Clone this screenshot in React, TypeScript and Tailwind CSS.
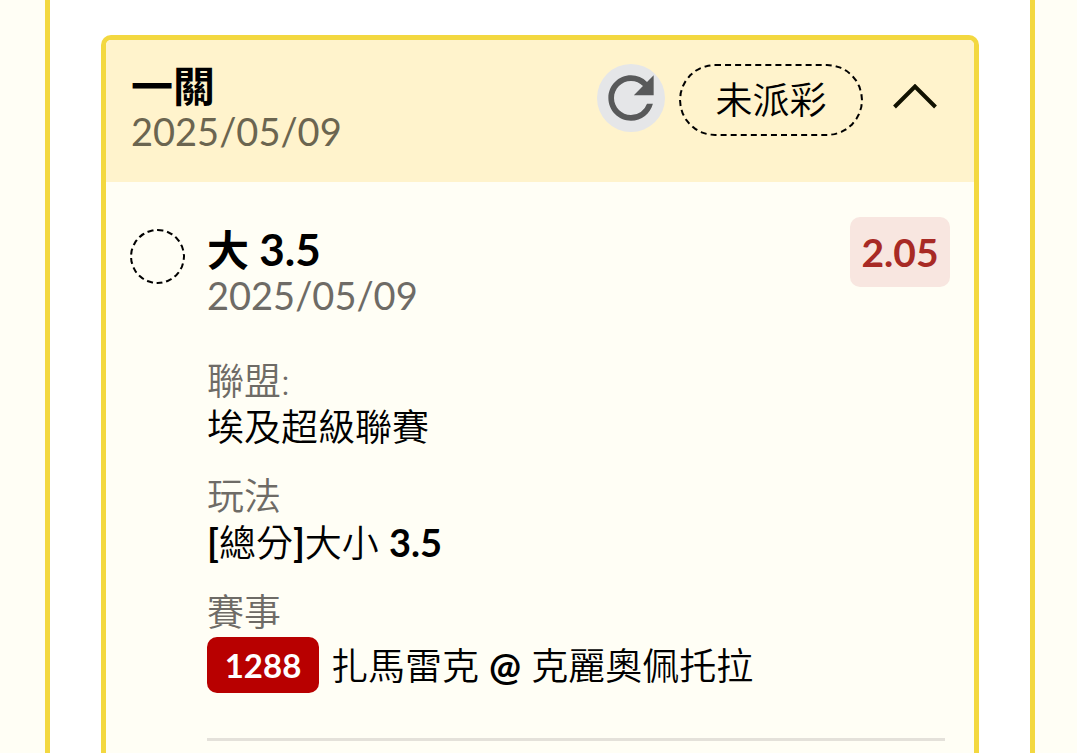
import { useState } from 'react'
import { MdRefresh } from 'react-icons/md'

type Detail = {
    label: string
    value: React.ReactNode
}

const details: Detail[] = [
    {
        label: '聯盟:',
        value: '埃及超級聯賽'
    },
    {
        label: '玩法',
        value: <><Latin>[</Latin>總分<Latin>]</Latin>大小 <Latin>3.5</Latin></>
    }
]

function Latin({children}: {children: React.ReactNode}){
    return <span className="text-[38px] font-bold">{children}</span>
}

function BetHeader({open, onToggle}: {open: boolean, onToggle: () => void}){
    return (
        <header className="flex justify-between items-start bg-[#fff3cc] pt-[24px] pb-[28px] pl-[25px] pr-[37px]">
            <div>
                <h1 className="text-[42px] leading-[44px] font-bold">一關</h1>
                <p className="text-[38px] leading-[46px] text-[#6b6550]">2025/05/09</p>
            </div>
            <div className="flex items-start">
                <button type="button" aria-label="重新整理" className="size-[68px] rounded-full bg-[#e5e6e8] text-[#58595a] cursor-pointer">
                    <MdRefresh className="size-full" />
                </button>
                <span className="ml-[14px] flex items-center justify-center w-[184px] h-[72px] rounded-full border-2 border-dashed border-black text-[37px] leading-[46px] font-[350]">未派彩</span>
                <button type="button" aria-label="收合" aria-expanded={open} onClick={onToggle} className="ml-[30px] h-[68px] cursor-pointer">
                    <svg className="w-[44px] h-[28px]" viewBox="0 0 44 28" fill="none" stroke="#111100" strokeWidth="4">
                        <path d="M1.5 23 L22 2.500 L42.500 23" />
                    </svg>
                </button>
            </div>
        </header>
    )
}

function BetDetail({label, value}: Detail){
    return (
        <div className="mb-[23px]">
            <dt className="text-[#6e6b66]">{label}</dt>
            <dd>{value}</dd>
        </div>
    )
}

function BetItem(){
    return (
        <div className="flex items-start pt-[35px] pl-6 pr-6">
            <span className="mt-[12px] size-[55px] shrink-0 rounded-full border-2 border-dashed border-black"></span>
            <div className="ml-[22px] grow">
                <div className="flex justify-between items-start">
                    <div className="pt-[10px]">
                        <h2 className="text-[42px] leading-[44px] font-bold">大 <span className="text-[44px]">3.5</span></h2>
                        <p className="text-[38px] leading-[46px] text-[#6e6b66]">2025/05/09</p>
                    </div>
                    <span className="flex items-center justify-center w-[100px] h-[70px] rounded-[10px] bg-[#f8e6e0] text-[39px] font-bold text-[#a82a25]">2.05</span>
                </div>
                <dl className="mt-[40px] text-[37px] leading-[46px] font-[350]">
                    {details.map((detail) => <BetDetail key={detail.label} {...detail} />)}
                    <dt className="text-[#6e6b66]">賽事</dt>
                    <dd className="mt-[2px] flex items-center">
                        <span className="flex items-center justify-center w-[112px] h-[56px] rounded-[10px] bg-[#b80000] text-[33px] font-bold text-white">1288</span>
                        <span className="ml-[12px]">扎馬雷克 <Latin>@</Latin> 克麗奧佩托拉</span>
                    </dd>
                </dl>
                <hr className="mt-[45px] mr-[5px] border-t-[3px] border-[#e4e1da]" />
            </div>
        </div>
    )
}

export default function App(){

    const [open, setOpen] = useState(true)

    return (
        <div className="flex flex-col h-screen overflow-hidden bg-[#fffef5] pl-[45px] pr-[42px] text-black font-['Lato','Noto_Sans_CJK_TC',sans-serif]">
            <main className="flex flex-col grow border-x-5 border-[#f3d840] bg-white px-[51px] pt-[35px]">
                <section className="grow rounded-t-[10px] border-5 border-b-0 border-[#f3d840] bg-[#fffef5] overflow-hidden">
                    <BetHeader open={open} onToggle={() => setOpen(!open)} />
                    {open && <BetItem />}
                </section>
            </main>
        </div>
    )

}
